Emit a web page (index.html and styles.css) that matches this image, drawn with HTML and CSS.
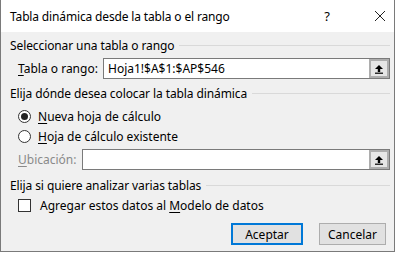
FILE: index.html
```html
<!DOCTYPE html>
<html lang="es">
<head>
<meta charset="utf-8">
<link rel="stylesheet" href="styles.css">
</head>
<body>
<div class="window">
  <div class="titlebar">
    <span class="title">Tabla dinámica desde la tabla o el rango</span>
    <span class="help">?</span>
    <span class="close"><svg width="12" height="12" viewBox="0 0 12 12"><path d="M1 1 L11 11 M11 1 L1 11" stroke="#222" stroke-width="1"/></svg></span>
  </div>
  <div class="body">
    <div class="group-head"><span>Seleccionar una tabla o rango</span><i class="rule"></i></div>
    <div class="row range-row">
      <span class="label"><u>T</u>abla o rango:</span>
      <div class="field"><span class="value">Hoja1!$A$1:$AP$546</span>
        <span class="pick"><svg width="10" height="10" viewBox="0 0 10 10"><path d="M5 1 L9 5 L6.2 5 L6.2 8 L3.8 8 L3.8 5 L1 5 Z" fill="#000"/><rect x="1" y="8.6" width="8" height="1.2" fill="#000"/></svg></span>
      </div>
    </div>
    <div class="group-head second"><span>Elija dónde desea colocar la tabla dinámica</span><i class="rule"></i></div>
    <div class="option"><span class="radio checked"></span><span><u>N</u>ueva hoja de cálculo</span></div>
    <div class="option"><span class="radio"></span><span><u>H</u>oja de cálculo existente</span></div>
    <div class="row loc-row">
      <span class="label disabled"><u>U</u>bicación:</span>
      <div class="field"><span class="value"></span>
        <span class="pick"><svg width="10" height="10" viewBox="0 0 10 10"><path d="M5 1 L9 5 L6.2 5 L6.2 8 L3.8 8 L3.8 5 L1 5 Z" fill="#000"/><rect x="1" y="8.6" width="8" height="1.2" fill="#000"/></svg></span>
      </div>
    </div>
    <div class="group-head third"><span>Elija si quiere analizar varias tablas</span><i class="rule"></i></div>
    <div class="option check-row"><span class="checkbox"></span><span>Agregar estos datos al <u>M</u>odelo de datos</span></div>
    <div class="buttons">
      <button class="btn default">Aceptar</button>
      <button class="btn cancel">Cancelar</button>
    </div>
  </div>
</div>
</body>
</html>
```
FILE: styles.css
```css
html, body {
  margin: 0;
  padding: 0;
  background: #ffffff;
}
body {
  font-family: "Noto Sans", "Open Sans", sans-serif;
  font-size: 12px;
  color: #000;
}
.window {
  width: 395px;
  height: 252px;
  box-sizing: border-box;
  border-left: 1px solid #7a7a7a;
  border-right: 1px solid #7a7a7a;
  border-bottom: 1px solid #7a7a7a;
  display: flex;
  flex-direction: column;
  background: #f0f0f0;
}
.titlebar {
  height: 32px;
  background: #fff;
  display: flex;
  align-items: center;
  padding-left: 9px;
  flex-shrink: 0;
}
.title {
  flex: 1;
  font-size: 12px;
  letter-spacing: -0.15px;
}
.help {
  width: 14px;
  margin-right: 40px;
  font-size: 13px;
  text-align: center;
}
.close {
  width: 12px;
  margin-right: 8px;
  display: flex;
}
.body {
  flex: 1;
  padding: 4px 4px 0 9px;
  display: flex;
  flex-direction: column;
}
.group-head {
  display: flex;
  align-items: center;
  height: 18px;
  gap: 5px;
  letter-spacing: -0.1px;
}
.group-head .rule {
  flex: 1;
  height: 1px;
  background: #d9d9d9;
}
.group-head.second { margin-top: 5px; }
.group-head.third { margin-top: 6px; }
.row {
  display: flex;
  align-items: center;
  padding-left: 8px;
}
.range-row { margin-top: 4px; }
.label {
  width: 85px;
  flex-shrink: 0;
}
.loc-row .label { width: 64px; }
.disabled { color: #8a8a8a; }
.field {
  flex: 1;
  height: 21px;
  box-sizing: border-box;
  border: 1px solid #7a7a7a;
  background: #fff;
  display: flex;
  align-items: center;
  padding-left: 4px;
}
.value { flex: 1; }
.pick {
  width: 20px;
  height: 19px;
  box-sizing: border-box;
  border: 2px solid #adadad;
  background: #e6e6e6;
  display: flex;
  align-items: center;
  justify-content: center;
}
.option {
  display: flex;
  align-items: center;
  height: 20px;
  padding-left: 8px;
  gap: 7px;
}
.group-head.second + .option { margin-top: 4px; }
.loc-row { margin-top: 3px; }
.radio {
  width: 13px;
  height: 13px;
  box-sizing: border-box;
  border: 1px solid #333;
  border-radius: 50%;
  background: #fff;
  display: flex;
  align-items: center;
  justify-content: center;
}
.radio.checked::after {
  content: "";
  width: 7px;
  height: 7px;
  border-radius: 50%;
  background: #222;
}
.check-row { margin-top: 1px; gap: 9px; }
.checkbox {
  width: 13px;
  height: 13px;
  box-sizing: border-box;
  border: 1px solid #333;
  background: #fff;
}
.buttons {
  display: flex;
  justify-content: flex-end;
  gap: 16px;
  margin-top: 8px;
  padding-right: 4px;
}
.btn {
  width: 72px;
  height: 22px;
  box-sizing: border-box;
  font-family: inherit;
  font-size: 12px;
  background: #e1e1e1;
  border: 1px solid #adadad;
  padding: 0;
  color: #000;
}
.btn.cancel { width: 67px; }
.btn.default {
  border: 2px solid #0078d7;
}
u { text-decoration-thickness: 1px; text-underline-offset: 2px; }
```
